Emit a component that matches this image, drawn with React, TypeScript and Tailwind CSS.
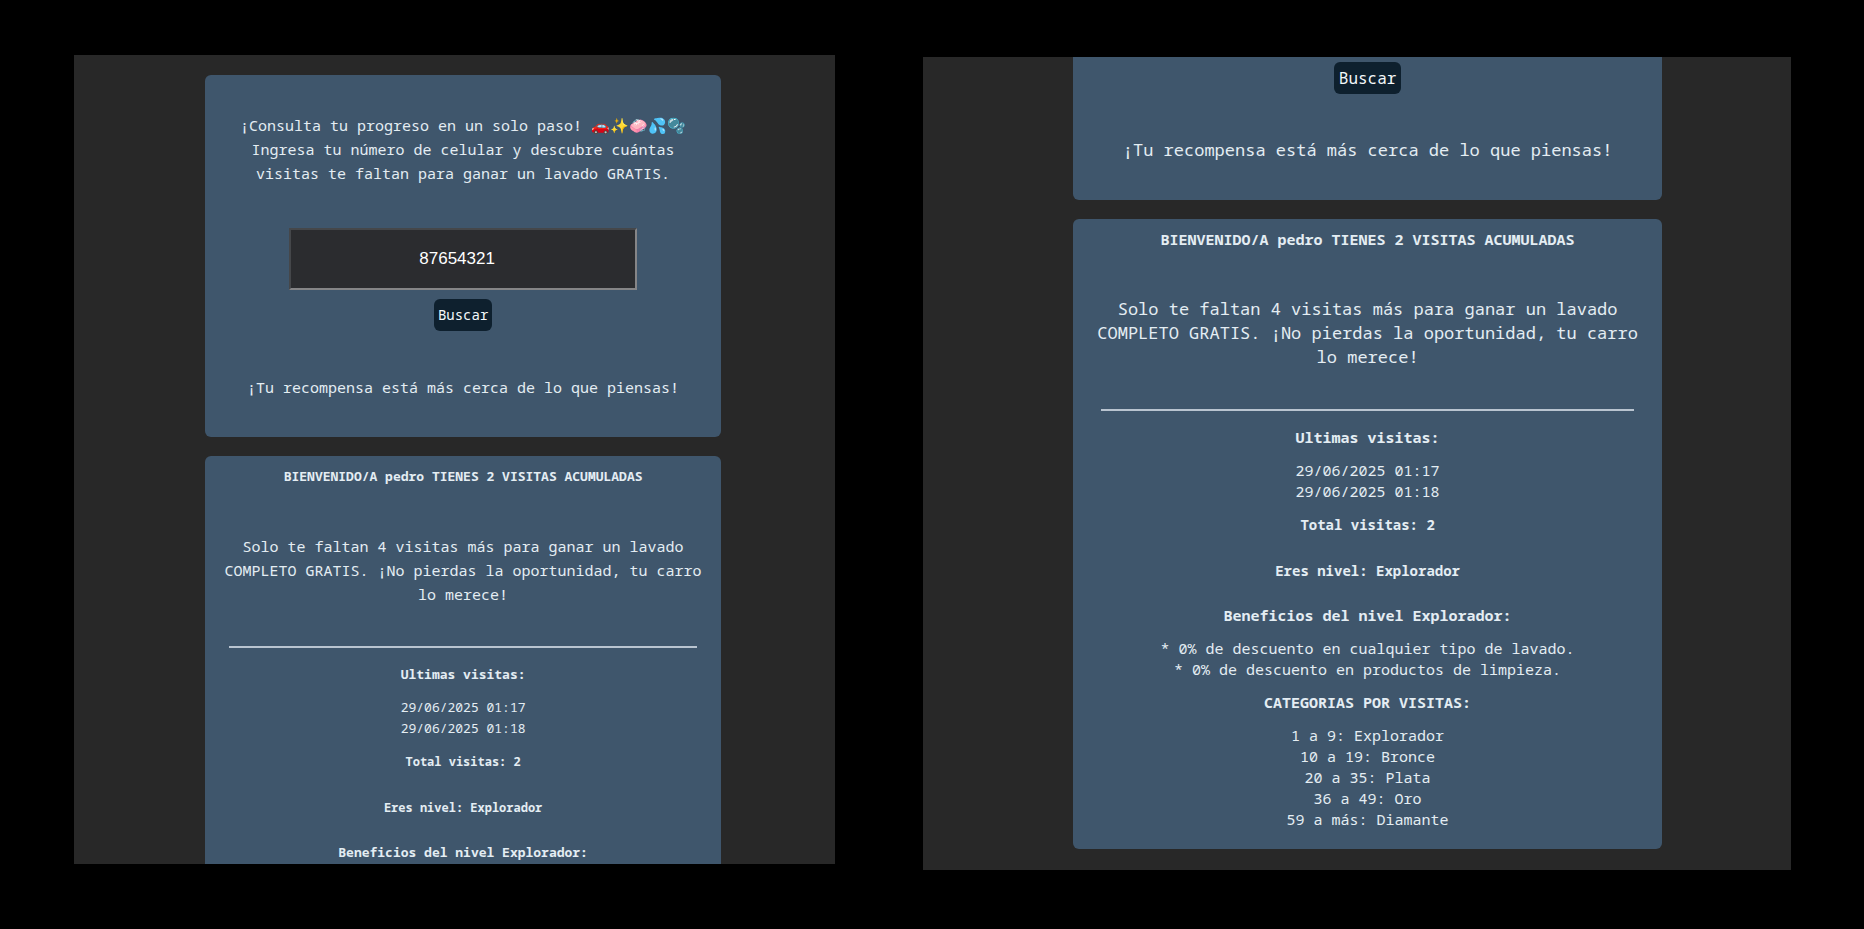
import { useState } from "react";

const monoFont = "font-['Noto_Sans_Mono','DejaVu_Sans_Mono',monospace]";

const visits = ["29/06/2025 01:17", "29/06/2025 01:18"];
const benefits = [
  "* 0% de descuento en cualquier tipo de lavado.",
  "* 0% de descuento en productos de limpieza.",
];
const categories = [
  "1 a 9: Explorador",
  "10 a 19: Bronce",
  "20 a 35: Plata",
  "36 a 49: Oro",
  "59 a más: Diamante",
];

type Size = "compact" | "wide";

const bodyText: Record<Size, string> = {
  compact: "text-[15px] leading-6",
  wide: "text-[17px] leading-6",
};
const detailText: Record<Size, string> = {
  compact: "text-[13px] leading-[21px]",
  wide: "text-[15px] leading-[21px]",
};
const levelText: Record<Size, string> = {
  compact: "text-[12px] leading-[21px]",
  wide: "text-[14px] leading-[21px]",
};
const buttonBox: Record<Size, string> = {
  compact: "h-8 px-1 text-[14px]",
  wide: "h-8 px-[5px] text-[16px]",
};
const summaryBox: Record<Size, string> = {
  compact: "flex-1 rounded-t-md px-6",
  wide: "rounded-md px-7 pb-[19px]",
};

function SearchButton({ size }: { size: Size }) {
  return (
    <button
      type="button"
      className={`${buttonBox[size]} rounded-md bg-[#0e202e] leading-6 text-[#f4f8fa]`}
    >
      Buscar
    </button>
  );
}

function PhoneField() {
  const [phone, setPhone] = useState("87654321");
  return (
    <input
      type="text"
      inputMode="numeric"
      aria-label="Número de celular"
      value={phone}
      onChange={(e) => setPhone(e.target.value)}
      className="mt-[43px] mb-[9px] h-[62px] w-[348px] max-w-full border-2 border-t-[#45474a] border-r-[#858587] border-b-[#858587] border-l-[#45474a] bg-[#2b2c2f] pr-3 text-center font-['Liberation_Sans',Arial,sans-serif] text-[17px] text-white"
    />
  );
}

function Reward({ size }: { size: Size }) {
  return (
    <p className={`${bodyText[size]} mt-11 whitespace-nowrap`}>
      ¡Tu recompensa está más cerca de lo que piensas!
    </p>
  );
}

function Lines({ items }: { items: string[] }) {
  return (
    <ul className="mt-3">
      {items.map((item) => (
        <li key={item}>{item}</li>
      ))}
    </ul>
  );
}

function Summary({ size, expanded = false }: { size: Size; expanded?: boolean }) {
  return (
    <section
      className={`${detailText[size]} ${summaryBox[size]} shrink-0 bg-[#3f566c] pt-[10px] text-center`}
    >
      <h2 className="font-bold">BIENVENIDO/A pedro TIENES 2 VISITAS ACUMULADAS</h2>
      <p className={`${bodyText[size]} mt-[47px] flex flex-col items-center whitespace-nowrap`}>
        <span>Solo te faltan 4 visitas más para ganar un lavado</span>
        <span>COMPLETO GRATIS. ¡No pierdas la oportunidad, tu carro</span>
        <span>lo merece!</span>
      </p>
      <hr className="mt-10 mb-4 border-t-2 border-[#b9c4d0]" />
      <h3 className="font-bold">Ultimas visitas:</h3>
      <Lines items={visits} />
      <p className={`${levelText[size]} mt-3 font-bold`}>Total visitas: 2</p>
      <p className={`${levelText[size]} mt-[25px] font-bold`}>Eres nivel: Explorador</p>
      <h3 className="mt-6 font-bold">Beneficios del nivel Explorador:</h3>
      {expanded && (
        <>
          <Lines items={benefits} />
          <h3 className="mt-3 font-bold">CATEGORIAS POR VISITAS:</h3>
          <Lines items={categories} />
        </>
      )}
    </section>
  );
}

export default function App() {
  return (
    <main
      className={`${monoFont} flex min-h-screen gap-[88px] bg-black pr-[73px] pl-[74px] text-[#e4edf3]`}
    >
      <div className="mt-[55px] mb-[65px] flex min-w-0 flex-[761] flex-col gap-[19px] bg-[#282828] pt-5 pr-[114px] pl-[131px]">
        <section className="flex shrink-0 flex-col items-center rounded-md bg-[#3f566c] pt-[38px] pb-[38px] text-center">
          <p className={`${bodyText.compact} flex flex-col items-center whitespace-nowrap`}>
            <span className="h-6">¡Consulta tu progreso en un solo paso! 🚗✨🧼💦🫧</span>
            <span>Ingresa tu número de celular y descubre cuántas</span>
            <span>visitas te faltan para ganar un lavado GRATIS.</span>
          </p>
          <PhoneField />
          <SearchButton size="compact" />
          <Reward size="compact" />
        </section>
        <Summary size="compact" />
      </div>

      <div className="mt-[57px] mb-[59px] flex min-w-0 flex-[868] flex-col gap-[19px] bg-[#282828] pr-[129px] pl-[150px]">
        <section className="flex shrink-0 flex-col items-center rounded-b-md bg-[#3f566c] pt-[5px] pb-[38px] text-center">
          <SearchButton size="wide" />
          <Reward size="wide" />
        </section>
        <Summary size="wide" expanded />
      </div>
    </main>
  );
}
